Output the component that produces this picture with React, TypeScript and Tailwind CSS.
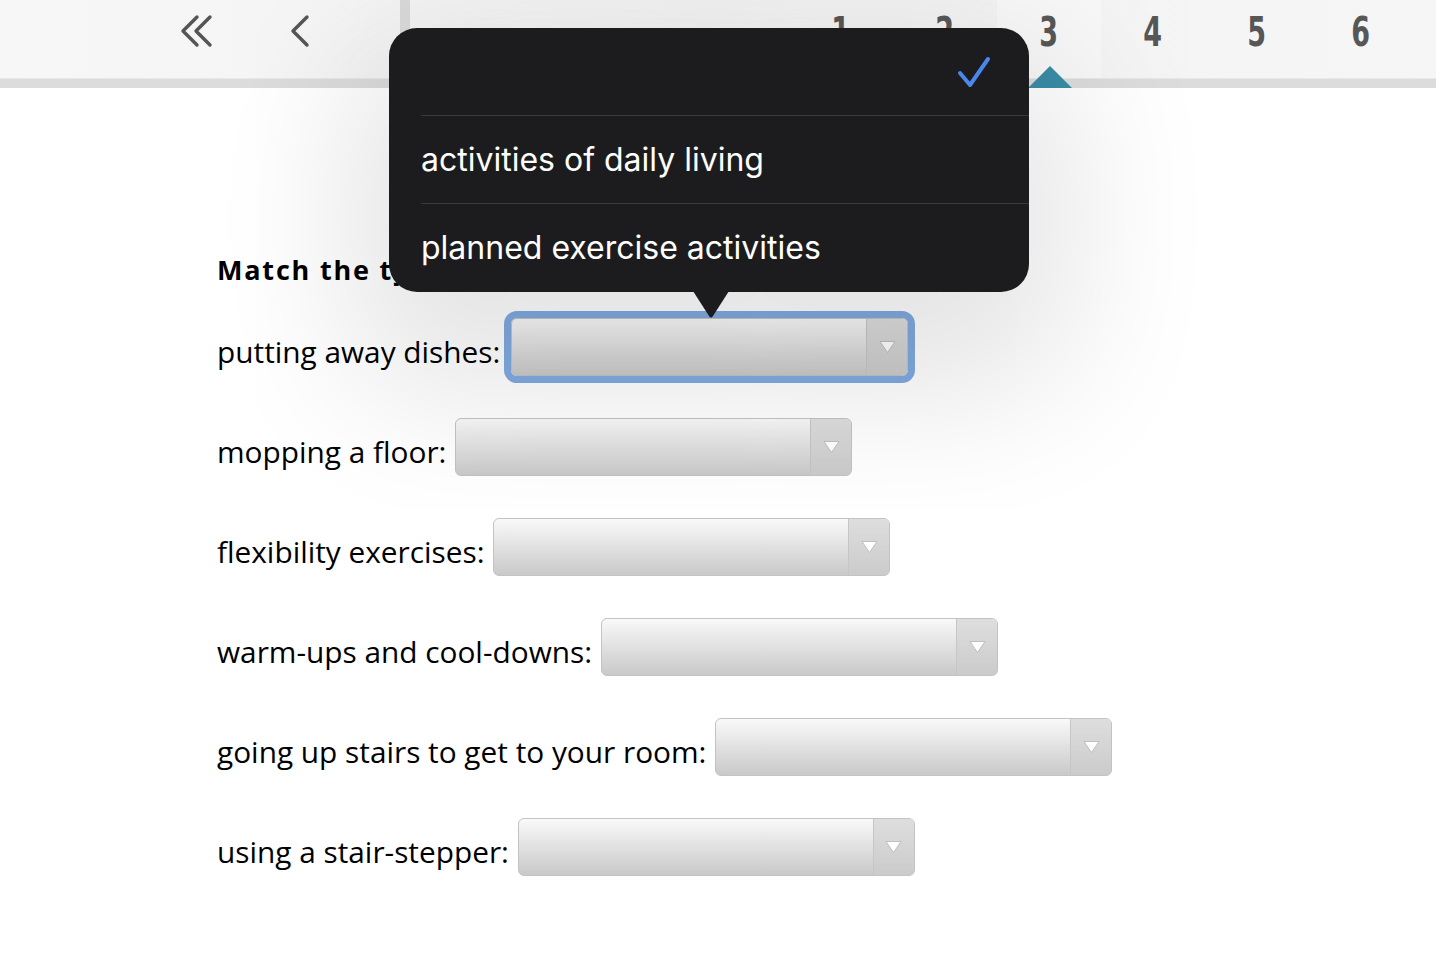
import React from "react";

const rows = [
  { label: "putting away dishes:", focused: true },
  { label: "mopping a floor:" },
  { label: "flexibility exercises:" },
  { label: "warm-ups and cool-downs:" },
  { label: "going up stairs to get to your room:" },
  { label: "using a stair-stepper:" },
];

function Select({ focused }: { focused?: boolean }) {
  return (
    <div
      className={
        "flex h-[58px] w-[397px] overflow-hidden rounded-[6px] border border-[#c3c3c3] bg-gradient-to-b from-[#f9f9f9] to-[#c9c9c9]" +
        (focused ? " ml-[11px] shadow-[0_0_0_7px_#80abe0]" : " ml-[9px]")
      }
    >
      <div className="flex-1" />
      <div className="flex w-[41px] items-center justify-center border-l border-[#c6c6c6] bg-gradient-to-b from-[#dedede] to-[#cbcbcb]">
        <svg width="17" height="14" viewBox="0 0 17 14">
          <path d="M1 1.5 L16 1.5 L8.5 12.5 Z" fill="#ffffff" stroke="#b5b5b5" strokeWidth="0.8" strokeLinejoin="round" />
        </svg>
      </div>
    </div>
  );
}

export default function App() {
  return (
    <div className="relative h-[961px] w-[1436px] overflow-hidden bg-white" style={{ fontFamily: "'Open Sans', 'Noto Sans', sans-serif" }}>
      {/* Top pager */}
      <header className="flex h-[88px] flex-col">
        <div className="flex h-[78px] bg-gradient-to-r from-[#f7f7f7] via-[#f2f2f2] to-[#f6f6f6]">
          <div className="flex w-[400px] items-start pl-[145px] pt-[14px]">
            <div className="flex w-[104px] justify-center">
              <svg width="34" height="34" viewBox="0 0 34 34" fill="none" stroke="#555" strokeWidth="3.4" strokeLinecap="round" strokeLinejoin="round">
                <path d="M17 3 L3 17 L17 31" />
                <path d="M30 3 L16 17 L30 31" />
              </svg>
            </div>
            <div className="flex w-[104px] justify-center">
              <svg width="22" height="34" viewBox="0 0 22 34" fill="none" stroke="#555" strokeWidth="3.4" strokeLinecap="round" strokeLinejoin="round">
                <path d="M17 3 L3 17 L17 31" />
              </svg>
            </div>
          </div>
          <div className="w-[10px] bg-[#dadada]" />
          <div className="flex flex-1 pl-[379px]">
            {[1, 2, 3, 4, 5, 6].map((n) => (
              <div
                key={n}
                className={
                  "relative flex w-[104px] items-start justify-center pt-[12px] " +
                  (n === 3 ? "bg-[#f8f8f8]" : "")
                }
              >
                <span
                  className="scale-x-[0.75] text-[40px] font-bold leading-none text-[#575757]"
                  style={{ fontFamily: "'DejaVu Sans Condensed', 'Liberation Sans Narrow', sans-serif" }}
                >
                  {n}
                </span>
                {n === 3 && (
                  <svg className="absolute bottom-[-10px] left-[31px]" width="44" height="22" viewBox="0 0 44 22">
                    <path d="M0 22 L22 0 L44 22 Z" fill="#3a8ca6" />
                  </svg>
                )}
              </div>
            ))}
          </div>
        </div>
        <div className="h-[10px] border-t border-[#e8e8e8] bg-[#dcdcdc]" />
      </header>

      {/* Question */}
      <main className="pl-[217px] pt-[166px] text-black">
        <h2 className="h-[32px] text-[27px] font-bold leading-[32px] tracking-[1.8px]">
          Match the type of activity with each example.
        </h2>
        <div className="mt-[32px] flex flex-col gap-[42px]">
          {rows.map((r) => (
            <div key={r.label} className="flex h-[58px] items-center">
              <span className="pt-[10px] text-[29.8px] leading-none">{r.label}</span>
              <Select focused={r.focused} />
            </div>
          ))}
        </div>
      </main>

      {/* Popover */}
      <div className="absolute left-[389px] top-[28px] w-[640px] rounded-[28px] bg-[#1c1c1e] text-white shadow-[0_60px_150px_40px_rgba(0,0,0,0.11)]" style={{ fontFamily: "Inter, 'Noto Sans', sans-serif" }}>
        <div className="flex h-[87px] items-center justify-end pr-[38px]">
          <svg width="34" height="32" viewBox="0 0 34 32" fill="none" stroke="#4a86ec" strokeWidth="4" strokeLinecap="round" strokeLinejoin="round">
            <path d="M3 17 L13 29 L31 3" />
          </svg>
        </div>
        <div className="ml-[32px] flex h-[88px] items-center border-t border-[#3a3a3c] text-[32px]">
          activities of daily living
        </div>
        <div className="ml-[32px] flex h-[89px] items-center border-t border-[#3a3a3c] text-[32px]">
          planned exercise activities
        </div>
        <svg className="absolute left-[304px] top-[263px]" width="36" height="28" viewBox="0 0 36 28">
          <path d="M0 0 L36 0 L20 25 Q18 28 16 25 Z" fill="#1c1c1e" />
        </svg>
      </div>
    </div>
  );
}
